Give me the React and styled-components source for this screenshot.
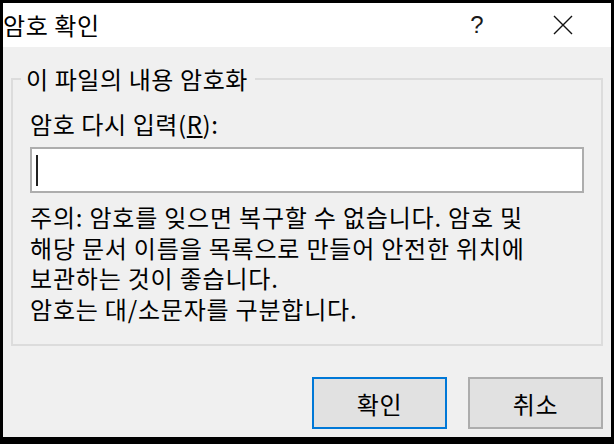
import React from "react";
import styled, { createGlobalStyle } from "styled-components";

const GlobalStyle = createGlobalStyle`
  html, body {
    margin: 0;
    padding: 0;
    background: #000;
  }
  body {
    font-family: "Noto Sans CJK KR", "Noto Sans", sans-serif;
    color: #000;
  }
`;

const Window = styled.div`
  box-sizing: border-box;
  width: 614px;
  height: 444px;
  border: solid #000;
  border-width: 3px 3px 7px 3px;
  display: flex;
  flex-direction: column;
  background: #f0f0f0;
`;

const TitleBar = styled.div`
  display: flex;
  align-items: center;
  height: 44px;
  background: #fff;
  flex-shrink: 0;
`;

const Title = styled.div`
  flex: 1;
  font-size: 24px;
  line-height: 30px;
  letter-spacing: 0.6px;
`;

const CaptionButton = styled.div`
  width: ${(p) => p.$width}px;
  height: 44px;
  display: flex;
  align-items: center;
  justify-content: center;
  font-size: 24px;
  font-family: "Liberation Sans", sans-serif;
  color: #1a1a1a;
`;

const Body = styled.div`
  flex: 1;
  display: flex;
  flex-direction: column;
  padding: 17px 8px 8px 8px;
`;

const GroupBox = styled.fieldset`
  margin: 0;
  border: 2px solid #dcdcdc;
  padding: 15px 17px 19px 17px;
  min-width: 0;
`;

const Legend = styled.legend`
  font-size: 24px;
  line-height: 30px;
  letter-spacing: 0.6px;
  padding: 0 7px 0 5px;
  margin-left: -9px;
`;

const FieldLabel = styled.div`
  font-size: 24px;
  line-height: 30px;
  letter-spacing: 0.6px;
`;

const Field = styled.div`
  box-sizing: border-box;
  height: 46px;
  margin-top: 8px;
  background: #fff;
  border: 2px solid #adadad;
  display: flex;
  align-items: center;
  padding-left: 4px;
`;

const Caret = styled.span`
  display: block;
  width: 2px;
  height: 31px;
  background: #222;
`;

const Note = styled.p`
  margin: 9px 0 0 0;
  font-size: 24px;
  line-height: 30.7px;
  letter-spacing: 0.8px;
`;

const ButtonRow = styled.div`
  display: flex;
  justify-content: flex-end;
  gap: 21px;
  margin-top: auto;
`;

const Button = styled.div`
  box-sizing: border-box;
  width: 135px;
  height: 52px;
  display: flex;
  align-items: center;
  justify-content: center;
  background: #e1e1e1;
  border: 2px solid ${(p) => (p.$primary ? "#0078d7" : "#adadad")};
  font-size: 24px;
  letter-spacing: 0.6px;
`;

const CloseIcon = () => (
  <svg width="20" height="20" viewBox="0 0 20 20">
    <path d="M1 1 L19 19 M19 1 L1 19" stroke="#111" strokeWidth="1.4" fill="none" />
  </svg>
);

export default function App() {
  return (
    <>
      <GlobalStyle />
      <Window>
        <TitleBar>
          <Title>암호 확인</Title>
          <CaptionButton $width={76}>?</CaptionButton>
          <CaptionButton $width={96}>
            <CloseIcon />
          </CaptionButton>
        </TitleBar>
        <Body>
          <GroupBox>
            <Legend>이 파일의 내용 암호화</Legend>
            <FieldLabel>
              암호 다시 입력(<u>R</u>):
            </FieldLabel>
            <Field>
              <Caret />
            </Field>
            <Note>
              주의: 암호를 잊으면 복구할 수 없습니다. 암호 및<br />
              해당 문서 이름을 목록으로 만들어 안전한 위치에<br />
              보관하는 것이 좋습니다.<br />
              암호는 대/소문자를 구분합니다.
            </Note>
          </GroupBox>
          <ButtonRow>
            <Button $primary>확인</Button>
            <Button>취소</Button>
          </ButtonRow>
        </Body>
      </Window>
    </>
  );
}
